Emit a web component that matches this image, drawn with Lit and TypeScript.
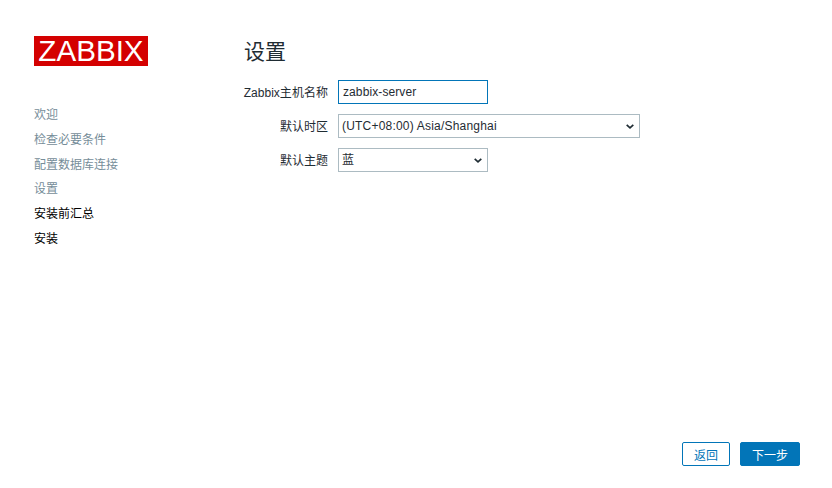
import { LitElement, html, css } from "lit";
import { customElement } from "lit/decorators.js";

const STEPS = [
  { label: "欢迎", done: true },
  { label: "检查必要条件", done: true },
  { label: "配置数据库连接", done: true },
  { label: "设置", done: true },
  { label: "安装前汇总", done: false },
  { label: "安装", done: false }
];

@customElement("app-root")
export class AppRoot extends LitElement {
  static override styles = css`
    :host {
      display: block;
      height: 100vh;
      background: #fff;
      color: #1f2c33;
      font-family: "Liberation Sans", "Noto Sans CJK SC", sans-serif;
      font-size: 12px;
    }

    .page {
      box-sizing: border-box;
      height: 100%;
      padding: 36px 32px 22px 34px;
      display: flex;
      flex-direction: column;
    }
    .body {
      flex: 1;
      display: flex;
    }

    .side {
      width: 210px;
      flex: none;
    }
    .logo {
      width: 114px;
      height: 30px;
      background: #d40000;
      color: #fff;
      font-size: 29.6px;
      line-height: 30px;
      text-align: center;
    }
    .steps {
      list-style: none;
      margin: 40px 0 0;
      padding: 0;
      display: flex;
      flex-direction: column;
      gap: 6.8px;
    }
    .steps li {
      line-height: 18px;
      color: #000;
    }
    .steps li.done {
      color: #768d99;
    }

    .main {
      flex: 1;
    }
    h1 {
      margin: 4px 0 16px;
      font-size: 21px;
      font-weight: 400;
      line-height: 24px;
    }
    .form {
      display: grid;
      grid-template-columns: 84px auto;
      justify-content: start;
      justify-items: start;
      align-items: center;
      gap: 10px;
    }
    label {
      justify-self: end;
      white-space: nowrap;
      padding-bottom: 2px;
      letter-spacing: 0.03px;
    }
    input,
    select {
      box-sizing: border-box;
      height: 24px;
      margin: 0;
      padding: 0 4px;
      border: 1px solid #acbbc2;
      border-radius: 0;
      background: #fff;
      color: #1f2c33;
      font: inherit;
      letter-spacing: 0.2px;
      outline: none;
      appearance: none;
    }
    input.active {
      width: 150px;
      border-color: #0275b8;
      letter-spacing: 0.1px;
    }
    .select {
      position: relative;
      display: block;
    }
    .select select {
      display: block;
      width: 100%;
      padding-left: 3px;
    }
    .select svg {
      position: absolute;
      right: 6px;
      top: 10px;
      width: 8px;
      height: 5px;
      pointer-events: none;
    }
    .wide {
      width: 302px;
    }
    .narrow {
      width: 150px;
    }

    .actions {
      display: flex;
      justify-content: flex-end;
      gap: 10px;
    }
    button {
      box-sizing: border-box;
      height: 24px;
      padding: 0;
      border: 1px solid #0275b8;
      border-radius: 2px;
      font: inherit;
      cursor: pointer;
    }
    .back {
      width: 48px;
      background: #fff;
      color: #0275b8;
    }
    .next {
      width: 60px;
      background: #0275b8;
      color: #fff;
    }
  `;

  private chevron() {
    return html`<svg viewBox="0 0 8 5" aria-hidden="true">
      <path d="M.7 .8 4 3.8 7.3 .8" fill="none" stroke="#1f2c33" stroke-width="1.7" />
    </svg>`;
  }

  override render() {
    return html`
      <div class="page">
        <div class="body">
          <aside class="side">
            <div class="logo">ZABBIX</div>
            <ul class="steps">
              ${STEPS.map((s) => html`<li class=${s.done ? "done" : ""}>${s.label}</li>`)}
            </ul>
          </aside>
          <main class="main">
            <h1>设置</h1>
            <div class="form">
              <label for="host">Zabbix主机名称</label>
              <input id="host" class="active" type="text" .value=${"zabbix-server"} />
              <label for="tz">默认时区</label>
              <span class="select wide">
                <select id="tz"><option>(UTC+08:00) Asia/Shanghai</option></select>
                ${this.chevron()}
              </span>
              <label for="theme">默认主题</label>
              <span class="select narrow">
                <select id="theme"><option>蓝</option></select>
                ${this.chevron()}
              </span>
            </div>
          </main>
        </div>
        <div class="actions">
          <button class="back">返回</button>
          <button class="next">下一步</button>
        </div>
      </div>
    `;
  }
}

declare global {
  interface HTMLElementTagNameMap {
    "app-root": AppRoot;
  }
}
